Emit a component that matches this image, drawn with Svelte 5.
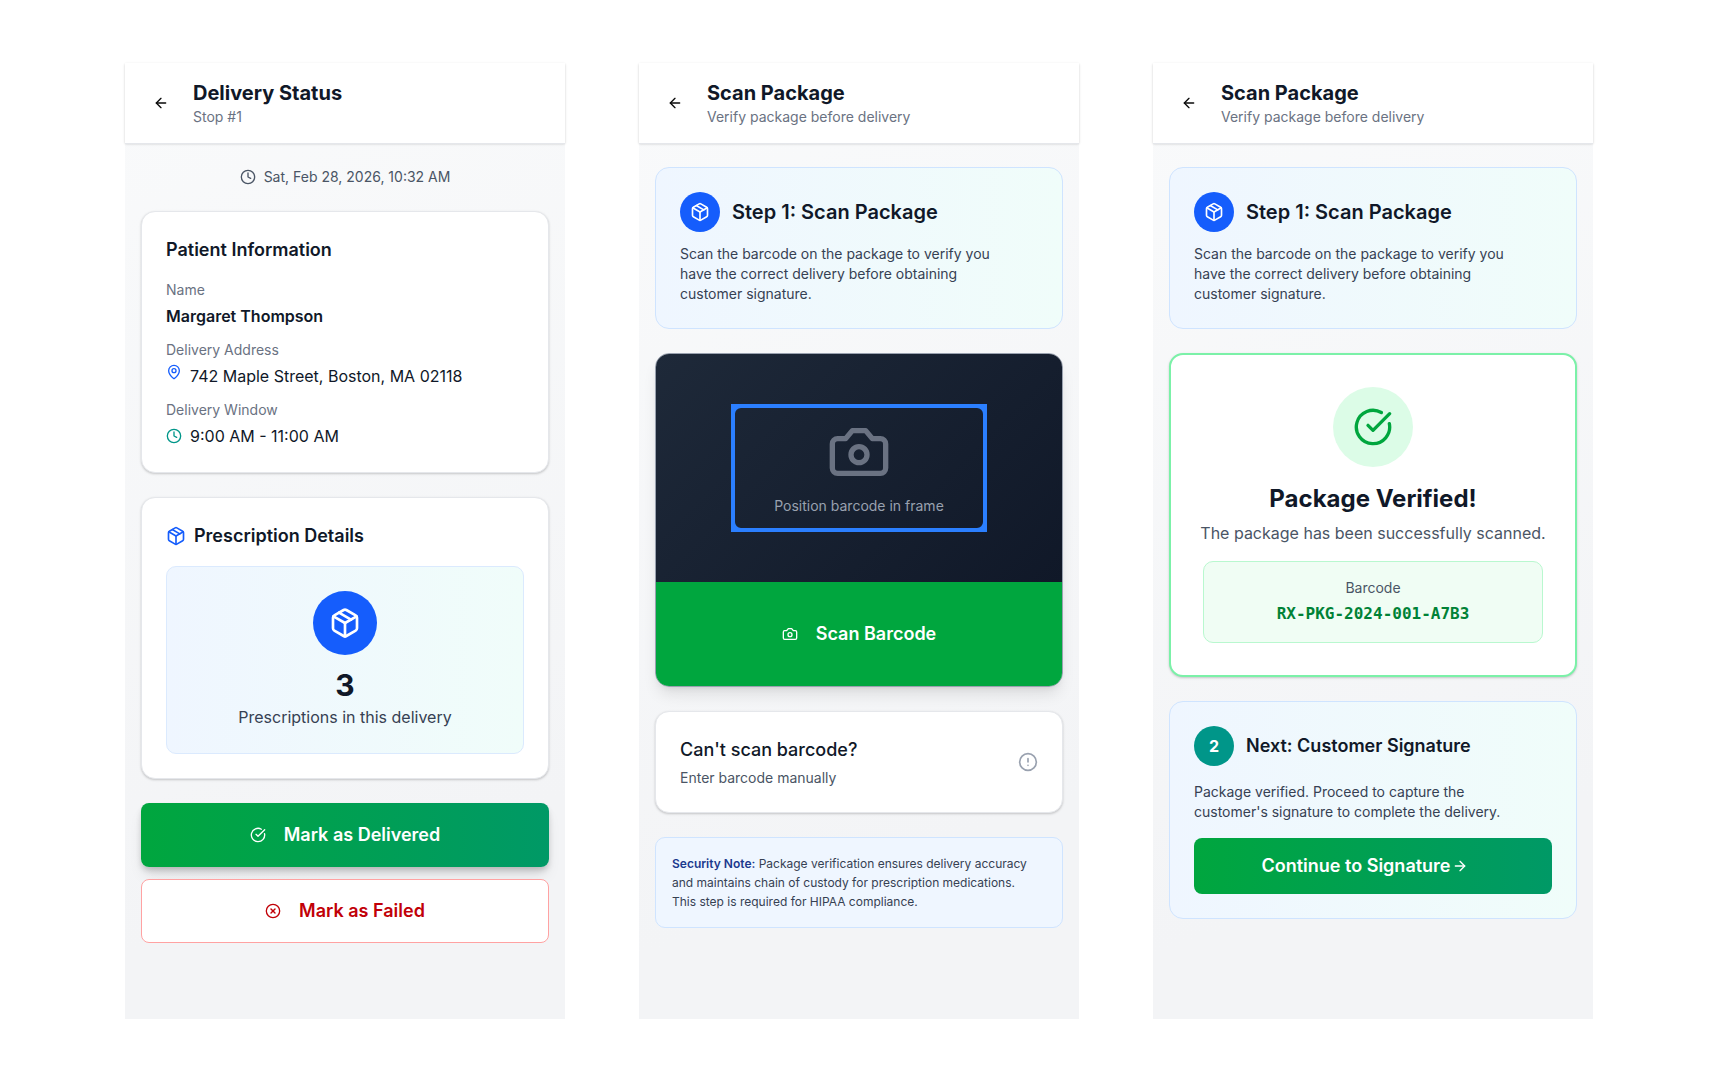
<script>
	let stopNumber = 1;
	let visitTime = 'Sat, Feb 28, 2026, 10:32 AM';
	let prescriptions = 3;
	let barcode = 'RX-PKG-2024-001-A7B3';

	const patient = {
		name: 'Margaret Thompson',
		address: '742 Maple Street, Boston, MA 02118',
		window: '9:00 AM - 11:00 AM'
	};
</script>

{#snippet icon(name, size)}
	<svg
		width={size}
		height={size}
		viewBox="0 0 24 24"
		fill="none"
		stroke="currentColor"
		stroke-width="2"
		stroke-linecap="round"
		stroke-linejoin="round"
		aria-hidden="true"
	>
		{#if name === 'arrow-left'}
			<path d="m12 19-7-7 7-7" />
			<path d="M19 12H5" />
		{:else if name === 'arrow-right'}
			<path d="M5 12h14" />
			<path d="m12 5 7 7-7 7" />
		{:else if name === 'clock'}
			<circle cx="12" cy="12" r="10" />
			<path d="M12 6v6l4 2" />
		{:else if name === 'pin'}
			<path
				d="M20 10c0 4.993-5.539 10.193-7.399 11.799a1 1 0 0 1-1.202 0C9.539 20.193 4 14.993 4 10a8 8 0 0 1 16 0"
			/>
			<circle cx="12" cy="10" r="3" />
		{:else if name === 'package'}
			<path
				d="M11 21.73a2 2 0 0 0 2 0l7-4A2 2 0 0 0 21 16V8a2 2 0 0 0-1-1.73l-7-4a2 2 0 0 0-2 0l-7 4A2 2 0 0 0 3 8v8a2 2 0 0 0 1 1.73z"
			/>
			<path d="M12 22V12" />
			<path d="m3.3 7 8.7 5 8.7-5" />
			<path d="m7.5 4.27 9 5.15" />
		{:else if name === 'camera'}
			<path
				d="M14.5 4h-5L7 7H4a2 2 0 0 0-2 2v9a2 2 0 0 0 2 2h16a2 2 0 0 0 2-2V9a2 2 0 0 0-2-2h-3z"
			/>
			<circle cx="12" cy="13" r="3" />
		{:else if name === 'check'}
			<path d="M21.801 10A10 10 0 1 1 17 3.335" />
			<path d="m9 11 3 3L22 4" />
		{:else if name === 'cross'}
			<circle cx="12" cy="12" r="10" />
			<path d="m15 9-6 6" />
			<path d="m9 9 6 6" />
		{:else if name === 'alert'}
			<circle cx="12" cy="12" r="10" />
			<path d="M12 8v4" />
			<path d="M12 16h.01" />
		{/if}
	</svg>
{/snippet}

{#snippet header(title, subtitle)}
	<header>
		<button class="back" aria-label="Back">{@render icon('arrow-left', 16)}</button>
		<div>
			<h1>{title}</h1>
			<p>{subtitle}</p>
		</div>
	</header>
{/snippet}

{#snippet scanStep()}
	<section class="card tinted">
		<div class="step">
			<span class="badge">{@render icon('package', 20)}</span>
			<h2 class="large">Step 1: Scan Package</h2>
		</div>
		<p class="hint">
			Scan the barcode on the package to verify you have the correct delivery before obtaining
			customer signature.
		</p>
	</section>
{/snippet}

<div class="page">
	<main class="screen">
		{@render header('Delivery Status', `Stop #${stopNumber}`)}
		<div class="content">
			<p class="date">{@render icon('clock', 16)} {visitTime}</p>

			<section class="card">
				<h2>Patient Information</h2>
				<dl>
					<dt>Name</dt>
					<dd class="name">{patient.name}</dd>
					<dt>Delivery Address</dt>
					<dd class="address">{@render icon('pin', 16)} {patient.address}</dd>
					<dt>Delivery Window</dt>
					<dd class="window">{@render icon('clock', 16)} {patient.window}</dd>
				</dl>
			</section>

			<section class="card">
				<h2 class="with_icon">{@render icon('package', 20)} Prescription Details</h2>
				<div class="summary">
					<span class="badge big">{@render icon('package', 32)}</span>
					<p class="count">{prescriptions}</p>
					<p class="count_label">Prescriptions in this delivery</p>
				</div>
			</section>

			<div class="actions">
				<button class="action delivered">{@render icon('check', 16)} Mark as Delivered</button>
				<button class="action failed">{@render icon('cross', 16)} Mark as Failed</button>
			</div>
		</div>
	</main>

	<main class="screen">
		{@render header('Scan Package', 'Verify package before delivery')}
		<div class="content">
			{@render scanStep()}

			<section class="scanner">
				<div class="viewfinder">
					<div class="frame">
						{@render icon('camera', 64)}
						<p>Position barcode in frame</p>
						<i class="corner top left"></i>
						<i class="corner top right"></i>
						<i class="corner bottom left"></i>
						<i class="corner bottom right"></i>
					</div>
				</div>
				<button class="action scan">{@render icon('camera', 16)} Scan Barcode</button>
			</section>

			<button class="card manual">
				<span>
					<strong>Can't scan barcode?</strong>
					<small>Enter barcode manually</small>
				</span>
				{@render icon('alert', 20)}
			</button>

			<p class="note">
				<strong>Security Note:</strong> Package verification ensures delivery accuracy and maintains
				chain of custody for prescription medications. This step is required for HIPAA compliance.
			</p>
		</div>
	</main>

	<main class="screen">
		{@render header('Scan Package', 'Verify package before delivery')}
		<div class="content">
			{@render scanStep()}

			<section class="card verified">
				<span class="badge success">{@render icon('check', 40)}</span>
				<h2>Package Verified!</h2>
				<p>The package has been successfully scanned.</p>
				<div class="barcode">
					<span>Barcode</span>
					<code>{barcode}</code>
				</div>
			</section>

			<section class="card tinted next">
				<div class="step">
					<span class="badge teal">2</span>
					<h2>Next: Customer Signature</h2>
				</div>
				<p class="hint">
					Package verified. Proceed to capture the customer's signature to complete the delivery.
				</p>
				<button class="action continue">
					Continue to Signature {@render icon('arrow-right', 16)}
				</button>
			</section>
		</div>
	</main>
</div>

<style>
	:global(body) {
		margin: 0;
		background: #fff;
	}

	.page {
		--ink: #101828;
		--muted: #6a7282;
		--slate: #4a5565;
		--blue: #155dfc;
		--green: #00a63e;
		box-sizing: border-box;
		display: grid;
		grid-template-columns: repeat(3, 1fr);
		gap: 74px;
		min-height: 100vh;
		padding: 63px 125px;
		color: var(--ink);
		font-family: Inter, 'Liberation Sans', sans-serif;
		font-size: 16px;
		line-height: 24px;
	}

	h1,
	h2,
	p,
	dl,
	dd {
		margin: 0;
	}

	svg {
		display: block;
		flex: none;
	}

	button {
		font: inherit;
		color: inherit;
		cursor: pointer;
	}

	.screen {
		background: linear-gradient(160deg, #f9fafb, #f3f4f6 80%);
	}

	header {
		display: flex;
		align-items: center;
		gap: 12px;
		padding: 16px;
		background: #fff;
		box-shadow:
			0 1px 0 #e5e7eb,
			0 1px 3px rgb(0 0 0 / 0.1),
			0 1px 2px rgb(0 0 0 / 0.1);
	}

	.back {
		display: grid;
		place-items: center;
		width: 40px;
		height: 40px;
		padding: 0;
		border: none;
		border-radius: 8px;
		background: transparent;
		color: #0a0a0a;
	}

	h1 {
		font-size: 20px;
		font-weight: 700;
		line-height: 28px;
	}

	header p {
		color: var(--muted);
		font-size: 14px;
		line-height: 20px;
	}

	.content {
		display: flex;
		flex-direction: column;
		gap: 24px;
		padding: 24px 16px;
	}

	.date {
		display: flex;
		align-items: center;
		justify-content: center;
		gap: 8px;
		color: var(--slate);
		font-size: 14px;
		line-height: 20px;
	}

	.card {
		padding: 24px;
		border: 1px solid #e5e7eb;
		border-radius: 14px;
		background: #fff;
		box-shadow:
			0 1px 3px rgb(0 0 0 / 0.1),
			0 1px 2px rgb(0 0 0 / 0.1);
	}

	h2 {
		font-size: 18px;
		font-weight: 600;
		line-height: 28px;
	}

	.large {
		font-size: 20px;
	}

	.with_icon {
		display: flex;
		align-items: center;
		gap: 8px;
	}

	.with_icon svg {
		color: var(--blue);
	}

	dl {
		margin-top: 16px;
	}

	dt {
		margin-bottom: 4px;
		color: var(--muted);
		font-size: 14px;
		line-height: 20px;
	}

	dd + dt {
		margin-top: 12px;
	}

	.name {
		font-weight: 600;
	}

	.address,
	.window {
		display: flex;
		gap: 8px;
	}

	.address svg {
		color: var(--blue);
	}

	.window {
		align-items: center;
	}

	.window svg {
		color: #009689;
	}

	.summary {
		margin-top: 16px;
		padding: 24px;
		border: 1px solid #dbeafe;
		border-radius: 10px;
		background: linear-gradient(90deg, #eff6ff, #f0fdfa);
		text-align: center;
	}

	.badge {
		display: grid;
		flex: none;
		place-items: center;
		width: 40px;
		height: 40px;
		border-radius: 50%;
		background: var(--blue);
		color: #fff;
	}

	.badge.big {
		width: 64px;
		height: 64px;
		margin: 0 auto 12px;
	}

	.badge.teal {
		background: #009689;
		font-weight: 700;
	}

	.badge.success {
		width: 80px;
		height: 80px;
		margin: 0 auto 16px;
		background: #dcfce7;
		color: var(--green);
	}

	.count {
		font-size: 30px;
		font-weight: 700;
		line-height: 36px;
	}

	.count_label {
		margin-top: 2px;
		color: #364153;
	}

	.actions {
		display: grid;
		gap: 12px;
	}

	.action {
		display: flex;
		align-items: center;
		justify-content: center;
		gap: 18px;
		width: 100%;
		height: 64px;
		padding: 0 24px;
		border: none;
		border-radius: 8px;
		color: #fff;
		font-size: 18px;
		font-weight: 600;
		line-height: 28px;
	}

	.delivered,
	.continue {
		background: linear-gradient(90deg, #00a63e, #009966);
	}

	.delivered {
		box-shadow:
			0 4px 6px -1px rgb(0 0 0 / 0.2),
			0 10px 15px -3px rgb(0 0 0 / 0.1);
	}

	.failed {
		border: 1px solid #ffa2a2;
		background: #fff;
		color: #c10007;
	}

	.tinted {
		border-color: #cfe4ff;
		background: linear-gradient(90deg, #eff6ff, #f0fdfa);
		box-shadow: none;
	}

	.step {
		display: flex;
		align-items: center;
		gap: 12px;
	}

	.hint {
		max-width: 320px;
		margin-top: 12px;
		color: #364153;
		font-size: 14px;
		line-height: 20px;
	}

	.scanner {
		overflow: hidden;
		border: 1px solid #99a1af;
		border-radius: 14px;
		box-shadow:
			0 10px 15px -3px rgb(0 0 0 / 0.1),
			0 4px 6px -4px rgb(0 0 0 / 0.1);
	}

	.viewfinder {
		display: grid;
		place-items: center;
		aspect-ratio: 16 / 9;
		background: linear-gradient(135deg, #1e2939, #101828);
	}

	.frame {
		position: relative;
		box-sizing: border-box;
		display: flex;
		flex-direction: column;
		align-items: center;
		justify-content: center;
		gap: 12px;
		width: 256px;
		height: 128px;
		border: 4px solid #2b7fff;
		border-radius: 10px;
		color: var(--muted);
	}

	.frame p {
		color: #99a1af;
		font-size: 14px;
		line-height: 20px;
	}

	.corner {
		position: absolute;
		width: 20px;
		height: 20px;
		border: 0 solid #2b7fff;
	}

	.top {
		top: -4px;
		border-top-width: 4px;
	}

	.bottom {
		bottom: -4px;
		border-bottom-width: 4px;
	}

	.left {
		left: -4px;
		border-left-width: 4px;
	}

	.right {
		right: -4px;
		border-right-width: 4px;
	}

	.scan {
		height: 104px;
		border-radius: 0;
		background: var(--green);
	}

	.manual {
		display: flex;
		align-items: center;
		justify-content: space-between;
		text-align: left;
	}

	.manual strong,
	.manual small {
		display: block;
	}

	.manual strong {
		margin-bottom: 4px;
		font-size: 18px;
		font-weight: 500;
		line-height: 28px;
	}

	.manual small {
		color: var(--slate);
		font-size: 14px;
		line-height: 20px;
	}

	.manual svg {
		color: #99a1af;
	}

	.note {
		padding: 16px 24px 16px 16px;
		border: 1px solid #cfe4ff;
		border-radius: 10px;
		background: #eff6ff;
		color: #364153;
		font-size: 12px;
		line-height: 19px;
	}

	.note strong {
		color: #1c398e;
		font-weight: 600;
	}

	.verified {
		padding: 32px 24px;
		border: 2px solid #7bf1a8;
		text-align: center;
	}

	.verified h2 {
		font-size: 24px;
		font-weight: 700;
		line-height: 32px;
	}

	.verified p {
		margin: 6px 0 16px;
		color: var(--slate);
	}

	.barcode {
		margin: 0 8px;
		padding: 16px;
		border: 1px solid #b9f8cf;
		border-radius: 10px;
		background: #f0fdf4;
	}

	.barcode span {
		display: block;
		margin-bottom: 4px;
		color: var(--slate);
		font-size: 14px;
		line-height: 20px;
	}

	.barcode code {
		display: block;
		color: #008236;
		font-family: 'DejaVu Sans Mono', monospace;
		font-size: 16px;
		font-weight: 700;
	}

	.next .hint {
		margin: 16px 0;
	}

	.continue {
		gap: 2px;
		height: 56px;
		padding-right: 40px;
	}
</style>
